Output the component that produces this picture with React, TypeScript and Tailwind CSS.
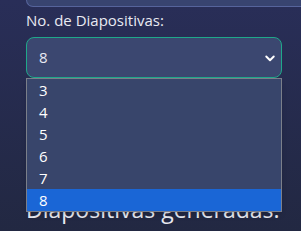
import React from 'react';

const options = [3, 4, 5, 6, 7, 8];

export default function App() {
  const selected = 8;

  return (
    <div
      className="w-[301px] h-[231px] overflow-hidden bg-gradient-to-b from-[#292e58] to-[#222842] text-[#e8eaf2]"
      style={{ fontFamily: '"Open Sans", "Noto Sans", sans-serif' }}
    >
      <div className="ml-[26px] h-[7px] rounded-bl-lg border-b border-l border-[#56649c] bg-[#384470]" />

      <div className="px-[26px]">
        <div className="mt-[3px] text-[15px] leading-[20px]">No. de Diapositivas:</div>

        <div className="relative mt-[7px] w-[256px]">
          <div className="flex h-[41px] items-center justify-between rounded-lg border border-[#1fa88a] bg-[#3b4770] pl-[12px] pr-[5px] text-[15px]">
            <span>{selected}</span>
            <svg width="12" height="12" viewBox="0 0 16 16" fill="none">
              <path d="M3 6l5 5 5-5" stroke="#ffffff" strokeWidth="2.6" strokeLinecap="round" strokeLinejoin="round" />
            </svg>
          </div>

          <div className="absolute left-0 top-[41px] z-10 w-[256px] border border-[#7b7f8a] bg-[#38456b] text-[15px] shadow-md">
            {options.map((n) => (
              <div
                key={n}
                className={
                  n === selected
                    ? 'h-[22px] pl-[12px] leading-[22px] bg-[#1a66d6] text-white'
                    : 'h-[22px] pl-[12px] leading-[22px] text-white'
                }
              >
                {n}
              </div>
            ))}
          </div>
        </div>

        <div className="mt-[116px] text-[23px] leading-[30px] whitespace-nowrap">Diapositivas generadas:</div>
      </div>
    </div>
  );
}
